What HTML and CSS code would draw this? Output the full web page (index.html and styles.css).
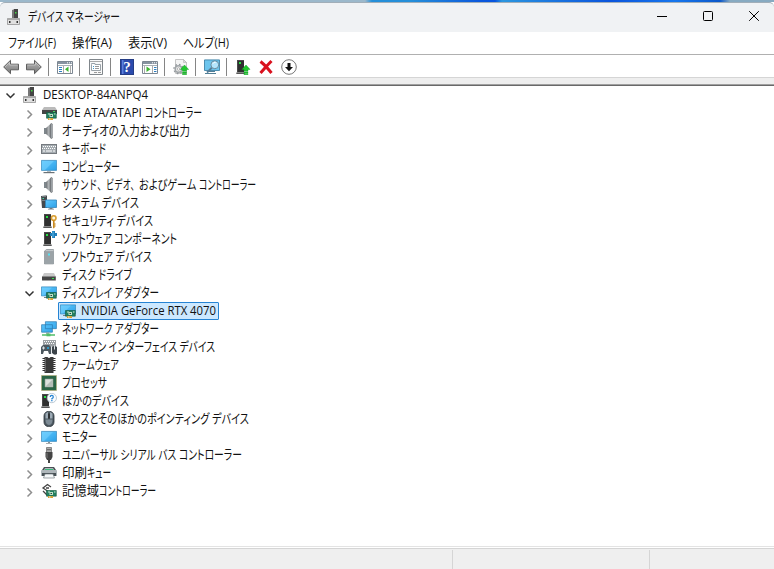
FILE: index.html
```
<!DOCTYPE html>
<html lang="ja">
<head>
    <meta charset="UTF-8">
    <meta name="viewport" content="width=device-width, initial-scale=1.0">
    <title>デバイス マネージャー</title>
    <link rel="stylesheet" href="styles.css">
</head>
<body>
    <svg class="sprite" width="0" height="0">
        <defs>
            <linearGradient id="gScreen" x1="0" y1="0" x2="1" y2="1">
                <stop offset="0" stop-color="#62caff"/><stop offset="1" stop-color="#2b9fe6"/>
            </linearGradient>
            <linearGradient id="gMetal"><stop offset="0" stop-color="#707478"/><stop offset=".5" stop-color="#b4b8ba"/><stop offset="1" stop-color="#53575a"/></linearGradient>
            <linearGradient id="gArrow" x1="0" y1="0" x2="0" y2="1"><stop offset="0" stop-color="#bbb"/><stop offset="1" stop-color="#777"/></linearGradient>
        </defs>
        <symbol id="pc" viewBox="0 0 16 16">
            <path fill="#777" d="M6 1l3-1v10H6z"/><path fill="#444" d="M8 0h4v10H8z"/><path fill="#45d645" d="M9 3h1.500v1.500H9z"/>
            <path fill="#e0e0e0" stroke="#888" stroke-width=".7" d="M1.500 9.500h12v6h-12z"/>
            <path fill="#aaa" d="M2 9h11v2H2z"/><path fill="#333" d="M3 12h1.500v2H3zM10.500 12H12v2h-1.500z"/>
        </symbol>
        <symbol id="card" viewBox="0 0 16 16">
            <path fill="#238060" stroke="#12583e" stroke-width=".6" d="M5.500 7.500h9.800v5.700H5.500z"/>
            <path fill="#cbe8d5" d="M7 8.500h2v1H7zM13 8.500h1.500v1H13z"/><path fill="#bde0c8" d="M8.500 9h3.500v3H8.500z"/><path fill="#24483a" d="M9.500 10h1.500v1H9.500z"/>
            <path fill="#d8a336" d="M7 13h5v2H7z"/><path fill="#eee" d="M8.500 13h.7v2h-.7z"/>
        </symbol>
        <symbol id="ide" viewBox="0 0 16 16">
            <path fill="#bbb" d="M3 2h11l2 3H1z"/><path fill="#454545" d="M1 5h15v4H1z"/><path fill="#45d662" d="M12 6h2v1h-2z"/><use href="#card"/>
        </symbol>
        <symbol id="speaker" viewBox="0 0 16 16">
            <path fill="#7e868b" d="M3 5h2.500v6H3z"/><path fill="url(#gMetal)" d="M5 5l5.500-5v16L5 11z"/>
            <path fill="#a8aeb2" stroke="#74797c" stroke-width=".5" d="M10 .5l1.500.5v14l-1.500.5z"/>
        </symbol>
        <symbol id="keyboard" viewBox="0 0 16 16">
            <path fill="#757a7f" d="M0 3h16v10H0z"/><path fill="#a5acb1" d="M1 4h14v8H1z"/>
            <path stroke="#fff" stroke-width="1" stroke-dasharray="1 1" d="M2 5.500h13M1 7.500h13"/><path stroke="#fff" d="M2 10h2M5 10h6M12 10h2"/>
        </symbol>
        <symbol id="computer" viewBox="0 0 16 16">
            <path fill="url(#gScreen)" stroke="#3384b7" stroke-width=".7" d="M.4 1.400h15.200v10H.4z"/><path fill="#7ad3ff" opacity=".55" d="M1 2h12L4 11H1z"/>
            <path fill="#b5bdc2" d="M6 12h4v1H6z"/><path fill="#6a7277" d="M2.500 13h11v1.200h-11z"/>
        </symbol>
        <symbol id="monitor" viewBox="0 0 16 16">
            <path fill="url(#gScreen)" stroke="#3384b7" stroke-width=".7" d="M.4 2.400h15.200v10H.4z"/><path fill="#7ad3ff" opacity=".55" d="M1 3h11L3 12H1z"/>
            <path fill="#8a9297" d="M7 13h2v1h2v.7H5V14h2z"/>
        </symbol>
        <symbol id="system" viewBox="0 0 16 16">
            <path fill="#44494d" d="M0 1l6-.5V13H1z"/><path fill="#7b8387" d="M1 1l4-.4v1.400H1zM1 5h4v1H1z"/><path fill="#45d6a2" d="M1.500 3H3v1H1.500z"/>
            <path fill="url(#gScreen)" stroke="#3384b7" stroke-width=".8" d="M4.500 5h11v7.500h-11z"/><path fill="#737b80" d="M8.500 13h3v.8H13v.7H7v-.7h1.500z"/>
        </symbol>
        <symbol id="tower" viewBox="0 0 16 16">
            <path fill="#4a4a4a" d="M3 1h7v12H3z"/><path fill="#303030" d="M4 2h6v11H4z"/><path fill="#29df45" d="M5 3h2v2H5z"/><path fill="#888" d="M2 14l1-1h7l1 1v1H2z"/><path fill="#444" d="M3 14.300h7v.7H3z"/>
        </symbol>
        <symbol id="security" viewBox="0 0 16 16">
            <use href="#tower"/><circle cx="12.700" cy="5" r="2.300" fill="#fff6dc" stroke="#d99d32" stroke-width="1.600"/><path fill="#c88a20" d="M12 7.500h1.600v7.200l-.8.800-.8-.8zM13 10.500h1.700v1H13zM13 12.500h1.700v1H13z"/>
        </symbol>
        <symbol id="component" viewBox="0 0 16 16">
            <use href="#tower"/><path fill="#1d7dba" d="M11 0h3v2h2v3h-2v2h-3V5H9V2h2z"/><path fill="#61b8e5" d="M11.500.5h1v6h-1z"/>
        </symbol>
        <symbol id="softdev" viewBox="0 0 16 16">
            <path fill="#899297" stroke="#757e83" stroke-width=".5" d="M3.500 2l2-1.500h7V15h-9z"/><path fill="#9ba3a7" d="M4 2.500h8.500V15H4z"/><path fill="#55e2f3" d="M7 4.500h2v2H7z"/><path fill="#c1c7ca" d="M5 1h7.500v1.200H4z"/>
        </symbol>
        <symbol id="disk" viewBox="0 0 16 16">
            <path fill="#c9c9c9" d="M3 6h10l2 4H1z"/><path fill="#464646" d="M1 9.500h13.800v4H1z"/><path fill="#34e34f" d="M11 11h2v1h-2z"/>
        </symbol>
        <symbol id="display" viewBox="0 0 16 16">
            <path fill="url(#gScreen)" stroke="#3384b7" stroke-width=".7" d="M.4 1.900h15.200v9H.4z"/><path fill="#7ad3ff" opacity=".5" d="M1 2.500h10L3 10.500H1z"/><path fill="#788289" d="M3 12h4v1H3z"/><use href="#card"/>
        </symbol>
        <symbol id="network" viewBox="0 0 16 16">
            <path fill="url(#gScreen)" stroke="#2b78ad" stroke-width=".7" d="M4.400.7h11v7h-11zM.6 3.700h10.800v7.500H.6z"/><path fill="#8f999e" d="M5 11.500h3v1.200H5z"/><path stroke="#51bd68" stroke-width="1.500" d="M1 14h13"/><path fill="#51bd68" d="M5.500 12.500h4v2.800h-4z"/>
        </symbol>
        <symbol id="human" viewBox="0 0 16 16">
            <path fill="#9da2a5" d="M2 1h13v7H2z"/><path stroke="#fff" stroke-dasharray="1 1" d="M3 2.500h11M4 4.500h10"/>
            <path fill="#4d5960" d="M0 8l2-2h6l2 2v7H8l-1-3H3l-1 3H0z"/><path fill="#d7e0e4" d="M1 8.500h3v1H1zM2 7.500h1v3H2z"/><circle cx="7" cy="9" r="1" fill="#2baee6"/>
            <path fill="#3c444a" d="M11 8q2.500-2 5 0v7q-2.500 2-5-1z"/><path fill="#dce2e5" d="M13 6.500h1v4h-1zM10 7h.7v8H10z"/>
        </symbol>
        <symbol id="firmware" viewBox="0 0 16 16">
            <path fill="none" stroke="#333" stroke-width="13" stroke-dasharray="1 1" d="M8 1v14"/><path fill="#393939" d="M3.500 0h3q1.500 2 3 0h3v16h-9z"/><path fill="#666" d="M4 1h1v14H4z"/>
        </symbol>
        <symbol id="cpu" viewBox="0 0 16 16">
            <path fill="#38744f" stroke="#b6a76d" stroke-width="1" stroke-dasharray="1 1" d="M.5.500h15v15H.5z"/><path fill="#2b6546" d="M1 1h14v14H1z"/><path fill="#dce1dd" stroke="#89958e" stroke-width=".6" d="M4 4h8v8H4z"/><path fill="#b4bdb7" d="M12 4v8H4z"/>
        </symbol>
        <symbol id="other" viewBox="0 0 16 16">
            <g transform="translate(-2)"><use href="#tower"/></g><circle cx="10.800" cy="5" r="4.700" fill="#f8fcff" stroke="#a5b5c1" stroke-width=".7"/>
            <path fill="none" stroke="#2482d2" stroke-width="1.200" d="M9.300 4q0-1.700 1.500-1.700T12.300 4q0 1-1.400 1.600v.8"/><path fill="#2482d2" d="M10.200 7.100h1.300v1.200h-1.300z"/>
        </symbol>
        <symbol id="mouse" viewBox="0 0 16 16">
            <rect x="3" y=".4" width="10" height="15.200" rx="4.500" fill="#4d5961" stroke="#273037" stroke-width=".8"/><path fill="#9dabb6" d="M4.500 2.500L7 1v6.500H4.500zM9 1l2.500 1.500v5H9z"/><path fill="#7d8b95" d="M4.500 8.500h7q0 5-3.500 5.500-3.500-.5-3.500-5.500z"/><path stroke="#222" stroke-width="1.400" d="M8 2.500v5"/>
        </symbol>
        <symbol id="usb" viewBox="0 0 16 16">
            <path fill="#aaa" stroke="#666" stroke-width=".7" d="M5.500.5h5v5h-5z"/><path fill="#333" d="M6.500 2h1v1.200h-1zM8.500 2h1v1.200h-1z"/><path fill="#444" d="M4.500 5h7v5l-1.500 3H9v3H7v-3H6l-1.500-3z"/><path fill="#777" d="M5.500 6h1v5h-1z"/>
        </symbol>
        <symbol id="printer" viewBox="0 0 16 16">
            <path fill="#495054" d="M3 2h10l2 3v5H1V5z"/><path fill="#aeb6ba" d="M4 3h8l1 2H3zM0 6q0-1 1-1h14q1 0 1 1v5H0z"/><path fill="#4a5357" d="M1 8h14v3H1z"/><path fill="#37b979" d="M4 4h8v1H4z"/><path fill="#f4f7f8" stroke="#677176" stroke-width=".6" d="M4 9h8l1.500 4h-11z"/>
        </symbol>
        <symbol id="storage" viewBox="0 0 16 16">
            <path fill="none" stroke="#444" stroke-width="1.300" d="M10 4L6.500 1.500 2 5l4.500 3M5 5h3M2 8l4 4"/><use href="#card"/>
        </symbol>
        <symbol id="back" viewBox="0 0 16 16">
            <path fill="url(#gArrow)" stroke="#5d5d5d" d="M.7 8l6.800-6.700v3.900h8v5.600h-8v3.900z"/><path fill="none" stroke="#d4d4d4" stroke-width=".6" d="M2 8l4.600-4.600V6h8"/>
        </symbol>
        <symbol id="window" viewBox="0 0 16 16">
            <path fill="#fff" stroke="#7c8792" d="M.5 2.500h15v12H.5z"/><path fill="#8793a0" d="M1 3h14v2H1z"/><path stroke="#fff" d="M10 3.800h1M12 3.800h1M14 3.800h1"/><path stroke="#a8b0b6" d="M1 6.500h14"/>
        </symbol>
        <symbol id="console" viewBox="0 0 16 16"><use href="#window"/><path stroke="#2e80c1" d="M2 8.500h3M2 10.500h3M2 12.500h3"/><path stroke="#aaa" d="M6.500 7v7M13.500 7v7"/><path fill="#3bb52e" d="M11.500 7.500v5.500L8 10.200z"/></symbol>
        <symbol id="play" viewBox="0 0 16 16"><use href="#window"/><path stroke="#aaa" d="M2.500 7v7M10.500 7v7"/><path stroke="#2e80c1" d="M12 8.500h2.500M12 10.500h2.500M12 12.500h2.500"/><path fill="#3bb52e" d="M4.500 7.500v5.500L8.500 10.200z"/></symbol>
        <symbol id="props" viewBox="0 0 16 16"><path fill="#f9f9f9" stroke="#80868b" d="M1.500.5h13v15h-13z"/><path stroke="#aaa" d="M2 2.500h12"/><path fill="#fff" stroke="#9aa2a8" d="M3.500 5.500v-1H7v1h5.500v6h-9z"/><path stroke="#429bd2" d="M5 7.500h1M5 9.500h1"/><path stroke="#999" d="M7 7.500h4M7 9.500h4M6 13.500h3M10 13.500h3"/></symbol>
        <symbol id="up" viewBox="0 0 16 16"><path fill="#20c92e" stroke="#0c9d22" stroke-width=".4" d="M11.500 6l4.200 4.500h-2.200V12h-4v-1.500H7.300zM9.500 12.700h4v1.200h-4zM9.500 14.600h4v1.200h-4z"/></symbol>
        <symbol id="update" viewBox="0 0 16 16"><path fill="#f4f4f4" stroke="#b8b8b8" stroke-width=".8" d="M2.500.5h8l3 3v11h-11z"/><path fill="#ddd" stroke="#aaa" stroke-width=".5" d="M10.500.5v3h3z"/><circle cx="5.500" cy="10" r="3.300" fill="#eee" stroke="#a0a5a8" stroke-width="1.600"/><circle cx="5.500" cy="10" r="4.600" fill="none" stroke="#90969a" stroke-width="1.300" stroke-dasharray="1.600 2"/><circle cx="5.500" cy="10" r="1.300" fill="#fff" stroke="#888" stroke-width=".6"/><use href="#up"/></symbol>
        <symbol id="scan" viewBox="0 0 16 16"><path fill="#6dc5ed" stroke="#34799e" stroke-width=".8" d="M.5.900h15v10.600H.5z"/><path stroke="#527e96" d="M1 14.500h11M5 12.500h6"/><path stroke="#557e99" stroke-width="1.800" d="M8 8.500l-5 5"/><circle cx="10.800" cy="5.800" r="3.900" fill="#b4e5fc" stroke="#668595" stroke-width=".9"/><path fill="none" stroke="#fff" d="M8.800 4.800q1-2 3-1.600"/></symbol>
        <symbol id="driver" viewBox="0 0 16 16"><g transform="translate(-1)"><use href="#tower"/></g><g transform="translate(-.5)"><use href="#up"/></g></symbol>
        <symbol id="remove" viewBox="0 0 16 16"><path stroke="#d9111e" stroke-width="3" d="M2.500 2.500q5 4 11 11.500M13.500 2q-5 5-11 12" fill="none"/></symbol>
        <symbol id="disable" viewBox="0 0 16 16"><circle cx="8" cy="8" r="7.300" fill="#fff" stroke="#777" stroke-width="1"/><path d="M6.500 4h3v4H12l-4 4.300L4 8h2.500z" fill="#111"/></symbol>
    </svg>

    <div class="desktop-strip"></div>
    <header class="titlebar">
        <svg class="icon"><use href="#pc"/></svg>
        <h1><span class="fit" data-w="92">デバイス マネージャー</span></h1>
        <div class="window-buttons">
            <svg viewBox="0 0 12 12"><path d="M1 6.500h10"/></svg>
            <svg viewBox="0 0 12 12"><rect x="1.500" y="1.500" width="9" height="9" rx="1"/></svg>
            <svg viewBox="0 0 12 12"><path d="M1.200 1.200l9.600 9.600M10.800 1.200l-9.600 9.600"/></svg>
        </div>
    </header>

    <nav class="menubar">
        <span class="fit" data-w="48">ファイル(F)</span>
        <span class="fit" data-w="40">操作(A)</span>
        <span class="fit" data-w="39">表示(V)</span>
        <span class="fit" data-w="46">ヘルプ(H)</span>
    </nav>

    <div class="toolbar">
        <svg class="icon"><use href="#back"/></svg>
        <svg class="icon forward"><use href="#back"/></svg>
        <i></i>
        <svg class="icon"><use href="#console"/></svg>
        <i></i>
        <svg class="icon"><use href="#props"/></svg>
        <i></i>
        <span class="help">?</span>
        <svg class="icon"><use href="#play"/></svg>
        <i></i>
        <svg class="icon"><use href="#update"/></svg>
        <i></i>
        <svg class="icon"><use href="#scan"/></svg>
        <i></i>
        <svg class="icon"><use href="#driver"/></svg>
        <svg class="icon"><use href="#remove"/></svg>
        <svg class="icon"><use href="#disable"/></svg>
    </div>
    <div class="toolbar-edge"></div>

    <main class="tree" id="deviceTree"></main>

    <footer class="statusbar">
        <div></div>
        <div></div>
        <div></div>
    </footer>

    <script src="script.js"></script>
</body>
</html>
```
FILE: styles.css
```
* {
    box-sizing: border-box;
}
body {
    margin: 0;
    height: 569px;
    display: flex;
    flex-direction: column;
    overflow: hidden;
    background-color: #fff;
    color: #111;
    font-family: "Open Sans", "Noto Sans CJK JP", sans-serif;
    font-size: 13px;
    line-height: 18px;
}
.sprite {
    position: absolute;
}
.icon {
    width: 16px;
    height: 16px;
    flex: none;
}
.fit {
    display: inline-block;
    flex: none;
    height: 18px;
    margin-top: -2px;
    white-space: pre;
    transform-origin: 0 50%;
    font-feature-settings: "palt";
}
.latin {
    margin-top: 0;
    font-size: 12px;
}
.comma {
    font-feature-settings: normal;
}
.desktop-strip {
    height: 2px;
    flex: none;
    background: linear-gradient(90deg, #9bb8cb 0, #9bb8cb 365px, #258fd9 372px, #258fd9 410px, #0b58dc 480px, #0755df 495px, #2b96df 502px, #1b77df 550px, #0b55dc 610px, #1676ed 675px, #0b58ca 720px, #87aac1 730px);
}
.titlebar {
    height: 30px;
    flex: none;
    display: flex;
    align-items: center;
    padding-left: 6px;
    background-color: #f0f2f4;
    border-top: 1px solid #a1aeb8;
    border-radius: 5px 5px 0 0;
}
.titlebar .icon {
    margin-top: -2px;
}
.titlebar h1 {
    display: flex;
    margin: -1px 0 0 6px;
    font-size: 13px;
    font-weight: normal;
    line-height: 18px;
}
.window-buttons {
    display: flex;
    gap: 34px;
    margin: -3px 0 0 auto;
    padding-right: 14px;
}
.window-buttons svg {
    width: 12px;
    height: 12px;
    fill: none;
    stroke: #000;
}
.menubar {
    height: 22px;
    flex: none;
    display: flex;
    align-items: center;
    gap: 16px;
    padding-left: 8px;
}
.toolbar {
    height: 24px;
    flex: none;
    display: flex;
    align-items: center;
    gap: 7px;
    padding: 2px 0 0 3px;
    border-top: 1px solid #b0b0b0;
    border-bottom: 1px solid #d5d5d5;
}
.toolbar i {
    width: 1px;
    height: 18px;
    margin: 0 1px 0 -1px;
    background-color: #858585;
}
.forward {
    transform: scaleX(-1);
}
.help {
    width: 14px;
    height: 16px;
    margin: 0 1px;
    background: linear-gradient(90deg, #2b4bad 1px, #5c81dc 1px, #5c81dc 2px, #2b4bad 3px);
    border: 1px solid #253d85;
    color: #fff;
    font: bold 15px/14px "Liberation Serif", serif;
    text-align: center;
}
.toolbar-edge {
    height: 8px;
    flex: none;
    background-color: #eee;
    border-bottom: 1px solid #696969;
    box-shadow: inset 0 -1px #a0a0a0;
}
.tree {
    flex: 1;
}
.row {
    height: 18px;
    display: flex;
    align-items: center;
    padding-left: 24px;
}
.root {
    padding-left: 5px;
}
.chevron {
    width: 11px;
    height: 11px;
    flex: none;
    margin: 2px 6px 0 0;
    fill: none;
    stroke: #8e8e8e;
    stroke-width: 1.5;
}
.chevron.open {
    stroke: #333;
    margin-top: 1px;
}
.row .icon {
    margin-right: 5px;
}
.child {
    padding-left: 58px;
}
.selected {
    width: 161px;
    height: 18px;
    display: flex;
    align-items: center;
    padding-left: 1px;
    background-color: #cce8ff;
    border: 1px solid #2583d3;
    border-radius: 1px;
}
.statusbar {
    height: 23px;
    flex: none;
    display: grid;
    grid-template-columns: 453px 197px 1fr;
    padding-top: 4px;
    background: linear-gradient(#e3e3e3 1px, #fff 1px, #fff 2px, #d5d5d5 2px, #d5d5d5 3px, #efefef 3px);
}
.statusbar div {
    border-right: 1px solid #d5d5d5;
}
.statusbar div:last-child {
    border-right: none;
}
```
FILE: script.js
```
// each text part is [text, width in px]
const devices = [
    { icon: "pc", root: true, open: true, parts: [["DESKTOP-84ANPQ4", 105]] },
    { icon: "ide", parts: [["IDE ATA/ATAPI ", 83], ["コントローラー", 57]] },
    { icon: "speaker", parts: [["オーディオの入力および出力", 128]] },
    { icon: "keyboard", parts: [["キーボード", 44]] },
    { icon: "computer", parts: [["コンピューター", 58]] },
    { icon: "speaker", parts: [["サウンド、", 44], ["ビデオ、", 33], ["およびゲーム ", 60], ["コントローラー", 57]] },
    { icon: "system", parts: [["システム デバイス", 77]] },
    { icon: "security", parts: [["セキュリティ デバイス", 91]] },
    { icon: "component", parts: [["ソフトウェア コンポーネント", 115]] },
    { icon: "softdev", parts: [["ソフトウェア デバイス", 90]] },
    { icon: "disk", parts: [["ディスク ドライブ", 70]] },
    { icon: "display", open: true, parts: [["ディスプレイ アダプター", 97]] },
    { icon: "display", child: true, parts: [["NVIDIA GeForce RTX 4070", 135]] },
    { icon: "network", parts: [["ネットワーク アダプター", 97]] },
    { icon: "human", parts: [["ヒューマン インターフェイス デバイス", 153]] },
    { icon: "firmware", parts: [["ファームウェア", 57]] },
    { icon: "cpu", parts: [["プロセッサ", 45]] },
    { icon: "other", parts: [["ほかのデバイス", 67]] },
    { icon: "mouse", parts: [["マウスとそのほかのポインティング デバイス", 187]] },
    { icon: "monitor", parts: [["モニター", 35]] },
    { icon: "usb", parts: [["ユニバーサル シリアル バス コントローラー", 180]] },
    { icon: "printer", parts: [["印刷", 25], ["キュー", 24]] },
    { icon: "storage", parts: [["記憶域", 37], ["コントローラー", 57]] }
];

function chevron(open) {
    const d = open ? "M1.500 3.500l4 4 4-4" : "M3.500 1.500l4 4-4 4";
    return `<svg class="chevron ${open ? "open" : ""}" viewBox="0 0 11 11"><path d="${d}"/></svg>`;
}

function label([text, width]) {
    let kind = "";
    if (/^[\x20-\x7e]+$/.test(text)) kind = "latin";
    if (text.endsWith("、")) kind = "comma";
    return `<span class="fit ${kind}" data-w="${width}">${text}</span>`;
}

document.getElementById("deviceTree").innerHTML = devices.map(item => {
    const content = `<svg class="icon"><use href="#${item.icon}"/></svg>${item.parts.map(label).join("")}`;
    if (item.child) {
        return `<div class="row child"><div class="selected">${content}</div></div>`;
    }
    return `<div class="row ${item.root ? "root" : ""}">${chevron(item.open)}${content}</div>`;
}).join("");

// squeeze the labels to the narrow UI widths
document.querySelectorAll(".fit").forEach(el => {
    const natural = el.getBoundingClientRect().width;
    const target = Number(el.dataset.w);
    el.style.transform = `scaleX(${target / natural})`;
    el.style.marginRight = `${target - natural}px`;
});
```
